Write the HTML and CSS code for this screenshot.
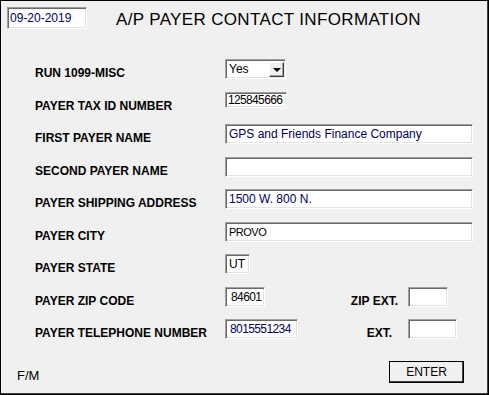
FILE: index.html
```html
<!DOCTYPE html>
<html>
<head>
  <title>A/P Payer Contact Information</title>

  <!-- Window styling -->
  <link rel="stylesheet" href="styles.css">
</head>
<body>

  <div class="window">

    <!-- Date box and form title -->
    <div class="header">
      <div class="box date-box">09-20-2019</div>
      <h1>A/P PAYER CONTACT INFORMATION</h1>
    </div>

    <!-- Payer fields -->
    <div class="form">
      <div class="label">RUN 1099-MISC</div>
      <div class="cell">
        <div class="box select">
          <span>Yes</span>
          <span class="drop"><span class="arrow"></span></span>
        </div>
      </div>

      <div class="label">PAYER TAX ID NUMBER</div>
      <div class="cell"><div class="box tax">125845666</div></div>

      <div class="label">FIRST PAYER NAME</div>
      <div class="cell"><div class="box wide blue">GPS and Friends Finance Company</div></div>

      <div class="label">SECOND PAYER NAME</div>
      <div class="cell"><div class="box wide"></div></div>

      <div class="label">PAYER SHIPPING ADDRESS</div>
      <div class="cell"><div class="box wide blue">1500 W. 800 N.</div></div>

      <div class="label">PAYER CITY</div>
      <div class="cell"><div class="box wide small">PROVO</div></div>

      <div class="label">PAYER STATE</div>
      <div class="cell"><div class="box state">UT</div></div>

      <div class="label">PAYER ZIP CODE</div>
      <div class="cell pair">
        <div class="box zip narrow">84601</div>
        <div class="label ext-label zip-ext">ZIP EXT.</div>
        <div class="box ext-field"></div>
      </div>

      <div class="label">PAYER TELEPHONE NUMBER</div>
      <div class="cell pair">
        <div class="box phone narrow blue">8015551234</div>
        <div class="label ext-label">EXT.</div>
        <div class="box ext-field phone-ext"></div>
      </div>
    </div>

    <!-- Bottom bar -->
    <div class="footer">
      <span class="mode">F/M</span>
      <button class="enter">ENTER</button>
    </div>

  </div>

</body>
</html>
```

FILE: styles.css
```css
/* Page reset */
body {
  margin: 0;
  font-family: "Liberation Sans", Arial, sans-serif;
}

/* Outer window frame */
.window {
  width: 489px;
  height: 395px;
  box-sizing: border-box;
  border: 1px solid #000;
  box-shadow: inset -1px -1px 0 #404040;
  background-color: #f0f0f0;
}

/* Header row with date and title */
.header {
  display: flex;
  align-items: flex-start;
  padding: 6px 0 0 6px;
}

.header h1 {
  margin: 0 0 0 29px;
  padding-top: 2px;
  font-size: 17px;
  font-weight: normal;
  line-height: 22px;
  letter-spacing: 0.35px;
  color: #000;
}

/* Sunken text box */
.box {
  box-sizing: border-box;
  height: 20px;
  background-color: #fff;
  border-style: solid;
  border-width: 1px;
  border-color: #a0a0a0 #fff #fff #a0a0a0;
  box-shadow: inset 1px 1px 0 #696969, inset -1px -1px 0 #e3e3e3;
  padding: 1px 3px 0 3px;
  font-size: 12px;
  line-height: 16px;
  white-space: nowrap;
  overflow: hidden;
}

.date-box {
  width: 80px;
  height: 22px;
  padding: 2px 2px 0 2px;
  color: #000060;
}

/* Form grid: labels on the left, fields on the right */
.form {
  display: grid;
  grid-template-columns: 190px 248px;
  grid-auto-rows: 32.5px;
  align-items: start;
  margin-top: 28px;
  padding-left: 34px;
}

.label {
  padding-top: 7px;
  font-size: 12px;
  font-weight: bold;
  line-height: 14px;
  color: #000;
}

.cell {
  display: flex;
}

/* Dropdown */
.select {
  display: flex;
  justify-content: space-between;
  width: 61px;
  padding: 1px 1px 0 3px;
}

.select .drop {
  display: flex;
  align-items: center;
  justify-content: center;
  box-sizing: border-box;
  width: 15px;
  height: 15px;
  margin-top: 1px;
  background-color: #f0f0f0;
  border: 1px solid;
  border-color: #fff #404040 #404040 #fff;
  box-shadow: inset -1px -1px 0 #a0a0a0;
}

.select .arrow {
  width: 0;
  height: 0;
  border-left: 4px solid transparent;
  border-right: 4px solid transparent;
  border-top: 4px solid #000;
}

/* Field widths */
.tax {
  width: 62px;
  height: 16px;
  padding: 0 0 0 2px;
  line-height: 14px;
  font-size: 12px;
  letter-spacing: -0.65px;
}

.wide {
  width: 248px;
}

.blue {
  color: #000060;
}

.small {
  font-size: 11px;
  letter-spacing: -0.5px;
}

.narrow {
  font-size: 12px;
  letter-spacing: -0.6px;
}

.state {
  width: 25px;
}

.zip {
  width: 40px;
  padding-left: 5px;
}

.phone {
  width: 73px;
  padding-left: 4px;
}

/* Extension fields next to zip and phone */
.pair {
  display: grid;
  grid-template-columns: 75px 108px auto;
  align-items: start;
}

.ext-label {
  padding-right: 16px;
  text-align: right;
  white-space: nowrap;
}

.zip-ext {
  padding-right: 10px;
}

.ext-field {
  width: 40px;
}

.phone-ext {
  width: 49px;
}

/* Bottom bar */
.footer {
  display: flex;
  justify-content: space-between;
  align-items: center;
  margin-top: 9px;
  padding: 0 24px 0 16px;
}

.mode {
  padding-top: 7px;
  font-size: 13px;
  color: #000;
}

.enter {
  box-sizing: border-box;
  width: 75px;
  height: 22px;
  padding: 0;
  background-color: #f0f0f0;
  border: 1px solid #000;
  box-shadow: inset -1px -1px 0 #404040;
  font-family: "Liberation Sans", Arial, sans-serif;
  font-size: 12px;
  color: #000;
}
```
